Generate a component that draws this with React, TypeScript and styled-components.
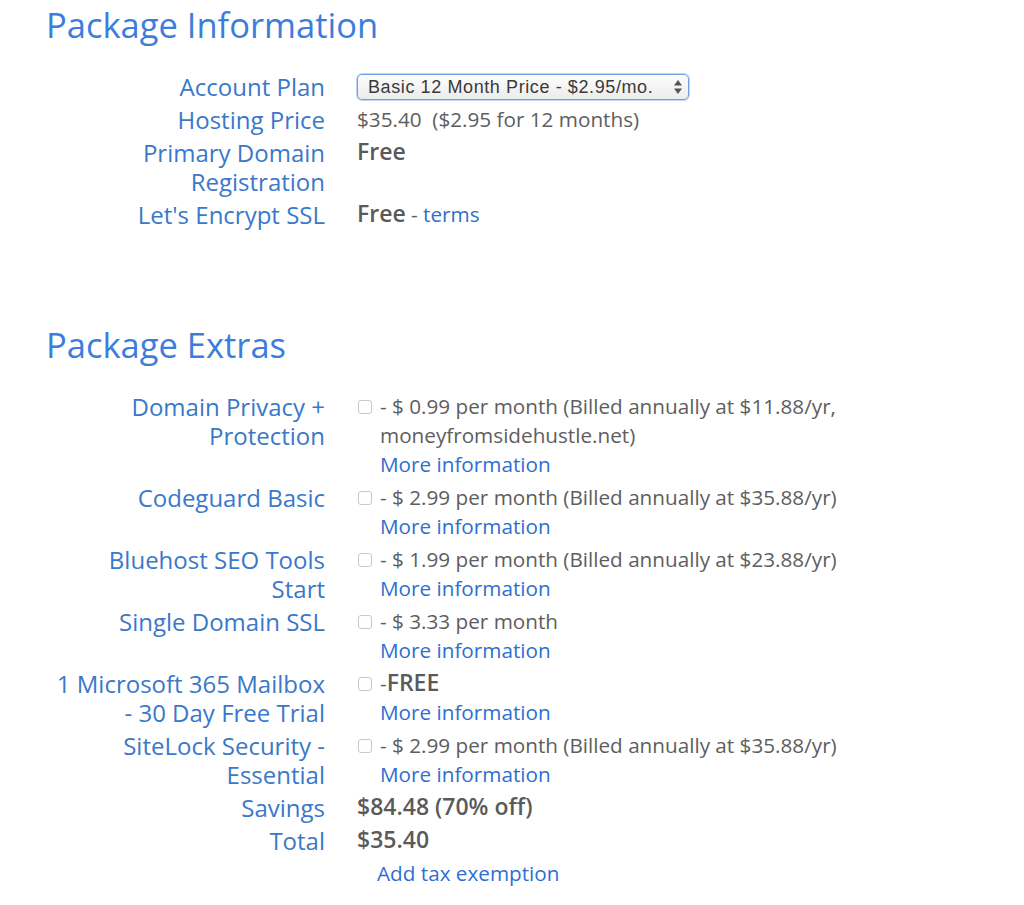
import React from 'react';
import styled, { createGlobalStyle } from 'styled-components';

const GlobalStyle = createGlobalStyle`
  body {
    margin: 0;
    background: #ffffff;
    font-family: "Open Sans", "Noto Sans", sans-serif;
  }
`;

const Page = styled.div`
  width: 1024px;
  padding: 3px 0 20px 0;
`;

const Section = styled.section<{ $gapAfter?: number }>`
  margin-bottom: ${props => props.$gapAfter ?? 0}px;
`;

const Heading = styled.h2`
  margin: 0 0 23px 46px;
  font-size: 34.5px;
  line-height: 44px;
  font-weight: 400;
  color: #3c7ddb;
`;

const Table = styled.div`
  display: grid;
  grid-template-columns: 290px 620px;
  column-gap: 32px;
  padding-left: 35px;
`;

const Label = styled.div`
  padding: 2px 0;
  text-align: right;
  font-size: 24px;
  line-height: 29px;
  color: #3a78c9;
  white-space: nowrap;
`;

const Value = styled.div`
  padding: 2px 0;
  font-size: 20.7px;
  line-height: 29px;
  color: #5e5e5e;
  white-space: nowrap;
`;

const Strong = styled.span`
  font-size: 23px;
  line-height: 1;
  font-weight: 600;
  color: #5a5a5a;
`;

const Link = styled.a`
  color: #2e6fd0;
  text-decoration: none;
  cursor: pointer;
`;

const SelectBox = styled.div`
  margin-top: 2px;
  width: 332px;
  height: 26px;
  box-sizing: border-box;
  display: flex;
  align-items: center;
  justify-content: space-between;
  padding: 0 6px 0 10px;
  border: 1px solid #6e9fdf;
  border-radius: 5px;
  box-shadow: 0 0 0 1px rgba(120, 165, 230, 0.45);
  background: linear-gradient(#fdfdfd, #ececec);
  font-family: "Liberation Sans", Arial, sans-serif;
  font-size: 18px;
  letter-spacing: 0.6px;
  color: #3a3a3a;
`;

const Arrows = styled.svg`
  width: 8px;
  height: 14px;
  fill: #555;
`;

const Extra = styled.div`
  display: flex;
  align-items: flex-start;
`;

const Check = styled.span`
  flex: none;
  width: 14px;
  height: 14px;
  margin: 8px 8px 0 1px;
  box-sizing: border-box;
  border: 1px solid #c8c8c8;
  border-radius: 3px;
  background: #fff;
`;

const ExtraText = styled.div`
  display: flex;
  flex-direction: column;
`;

const TaxLink = styled(Link)`
  display: block;
  margin-left: 20px;
`;

interface ExtraRow {
  label: string[];
  price: React.ReactNode;
}

const extras: ExtraRow[] = [
  {
    label: ['Domain Privacy +', 'Protection'],
    price: (
      <>
        - $ 0.99 per month (Billed annually at $11.88/yr,
        <br />
        moneyfromsidehustle.net)
      </>
    ),
  },
  {
    label: ['Codeguard Basic'],
    price: '- $ 2.99 per month (Billed annually at $35.88/yr)',
  },
  {
    label: ['Bluehost SEO Tools', 'Start'],
    price: '- $ 1.99 per month (Billed annually at $23.88/yr)',
  },
  {
    label: ['Single Domain SSL'],
    price: '- $ 3.33 per month',
  },
  {
    label: ['1 Microsoft 365 Mailbox', '- 30 Day Free Trial'],
    price: (
      <>
        -<Strong>FREE</Strong>
      </>
    ),
  },
  {
    label: ['SiteLock Security -', 'Essential'],
    price: '- $ 2.99 per month (Billed annually at $35.88/yr)',
  },
];

const Lines: React.FC<{ lines: string[] }> = ({ lines }) => (
  <Label>
    {lines.map((line, i) => (
      <div key={i}>{line}</div>
    ))}
  </Label>
);

const App: React.FC = () => {
  return (
    <Page>
      <GlobalStyle />
      <Section $gapAfter={92}>
        <Heading>Package Information</Heading>
        <Table>
          <Lines lines={['Account Plan']} />
          <Value>
            <SelectBox>
              <span>Basic 12 Month Price - $2.95/mo.</span>
              <Arrows viewBox="0 0 8 14">
                <path d="M4 0 L8 5.5 H0 Z" />
                <path d="M4 14 L8 8.5 H0 Z" />
              </Arrows>
            </SelectBox>
          </Value>

          <Lines lines={['Hosting Price']} />
          <Value>$35.40&nbsp;&nbsp;($2.95 for 12 months)</Value>

          <Lines lines={['Primary Domain', 'Registration']} />
          <Value>
            <Strong>Free</Strong>
          </Value>

          <Lines lines={["Let's Encrypt SSL"]} />
          <Value>
            <Strong>Free</Strong> - <Link>terms</Link>
          </Value>
        </Table>
      </Section>

      <Section>
        <Heading>Package Extras</Heading>
        <Table>
          {extras.map((extra, index) => (
            <React.Fragment key={index}>
              <Lines lines={extra.label} />
              <Value>
                <Extra>
                  <Check />
                  <ExtraText>
                    <span>{extra.price}</span>
                    <Link>More information</Link>
                  </ExtraText>
                </Extra>
              </Value>
            </React.Fragment>
          ))}

          <Lines lines={['Savings']} />
          <Value>
            <Strong>$84.48 (70% off)</Strong>
          </Value>

          <Lines lines={['Total']} />
          <Value>
            <Strong>$35.40</Strong>
          </Value>

          <Label />
          <Value>
            <TaxLink>Add tax exemption</TaxLink>
          </Value>
        </Table>
      </Section>
    </Page>
  );
};

export default App;
